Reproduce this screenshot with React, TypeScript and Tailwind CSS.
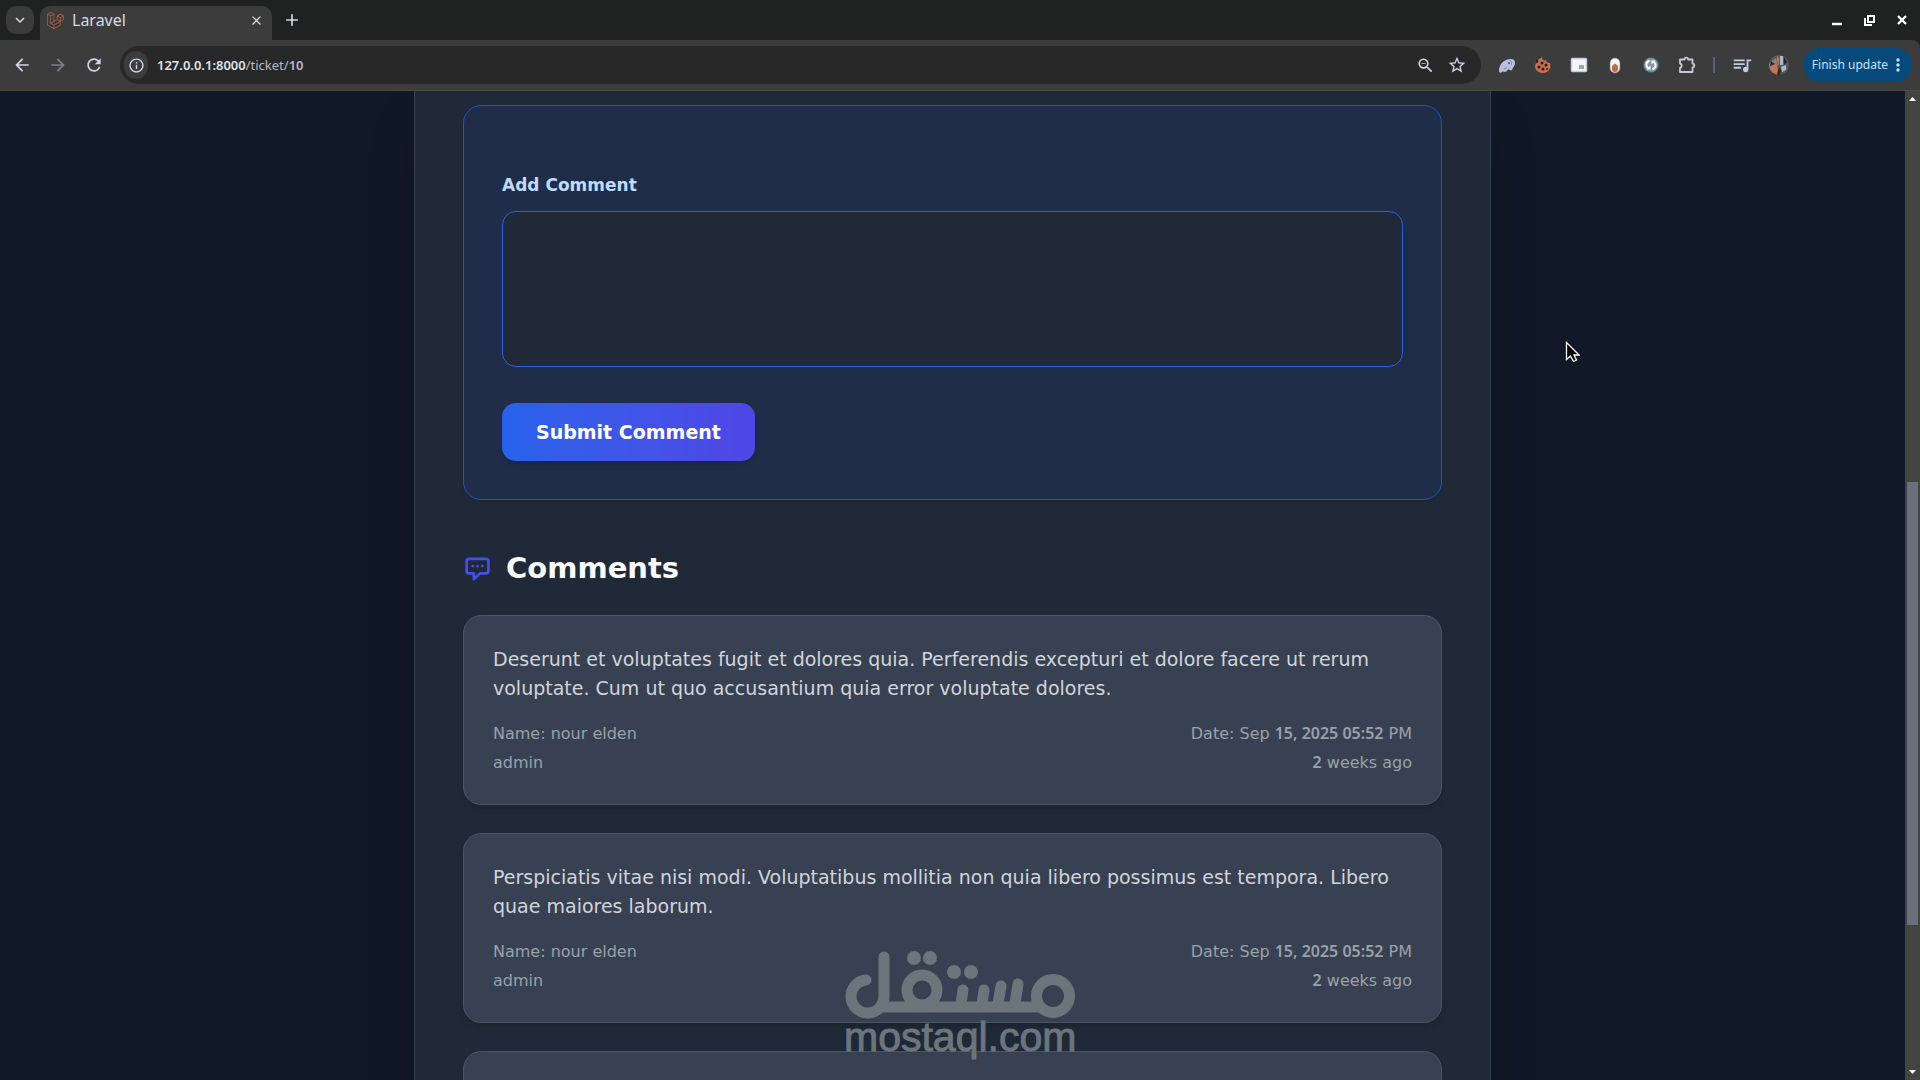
import React from "react";
import {
  MdArrowBack,
  MdArrowForward,
  MdRefresh,
  MdInfoOutline,
  MdOutlineZoomOut,
  MdStarBorder,
  MdQueueMusic,
  MdMoreVert,
  MdAdd,
  MdClose,
  MdKeyboardArrowDown,
} from "react-icons/md";
import { FaLaravel } from "react-icons/fa";

function TabStrip() {
  return (
    <div className="flex h-10 shrink-0 items-end bg-[#202221] text-[#d6dbe4]">
      <button aria-label="Search tabs" className="mb-[6px] ml-[6px] flex h-7 w-7 items-center justify-center rounded-[10px] bg-[#3b3b3b]">
        <MdKeyboardArrowDown size={18} />
      </button>
      <div className="ml-[6px] flex h-[34px] w-[232px] items-center rounded-t-[10px] bg-[#3c3c3c] pr-2 pb-[6px] pl-[7px]">
        <FaLaravel size={17} className="text-[#d4714a]" />
        <span className="ml-2 flex-1 font-['Noto_Sans'] text-[16px] leading-5">Laravel</span>
        <button aria-label="Close tab"><MdClose size={15} /></button>
      </div>
      <button aria-label="New tab" className="mb-[10px] ml-[10px]"><MdAdd size={20} /></button>
      <div className="mb-[10px] ml-auto flex items-center gap-[14px] pr-[9px] text-white">
        <button aria-label="Minimize" className="flex h-5 w-[18px] items-center justify-center">
          <svg width="18" height="20" viewBox="0 0 18 20"><path d="M3 14h10" stroke="currentColor" strokeWidth="2.4" /></svg>
        </button>
        <button aria-label="Restore" className="flex h-5 w-[18px] items-center justify-center">
          <svg width="18" height="20" viewBox="0 0 18 20" fill="none" stroke="currentColor" strokeWidth="2">
            <path d="M7 6h6v6H7zM4 8v7h7" />
          </svg>
        </button>
        <button aria-label="Close window" className="flex h-5 w-[18px] items-center justify-center">
          <svg width="18" height="20" viewBox="0 0 18 20"><path d="M5 6l8 8M13 6l-8 8" stroke="currentColor" strokeWidth="2.4" /></svg>
        </button>
      </div>
    </div>
  );
}

function Extensions() {
  return (
    <div className="flex items-center gap-4">
      <button aria-label="Elephant extension">
        <svg width="20" height="20" viewBox="0 0 20 20">
          <path d="M2 16c0-7 5-12 12-12 3 0 4 2 4 4 0 3-2 4-3 7-1 1-3 0-3-1-2 2-3 3-5 3-1-1-1-1-2 0s-3 1-3-1z" fill="#b6c2dd" />
          <path d="M13 5c2 1 2 4 1 5M7 14c1-1 2-1 3-1" fill="none" stroke="#7482a8" />
          <circle cx="12" cy="8" r="1" fill="#3340c0" />
        </svg>
      </button>
      <button aria-label="Cookie extension">
        <svg width="20" height="20" viewBox="0 0 20 20">
          <path d="M9 2c0 3 2 4 4 3 0 2 1 3 4 3 2 5-2 10-7 10S2 15 2 11l1-3c2 1 3-1 2-3z" fill="#c96f4c" />
          <g fill="#241f1d"><circle cx="9" cy="8" r="1.5" /><circle cx="6" cy="12" r="1.5" /><circle cx="10" cy="14" r="1.5" /><circle cx="13" cy="10" r="1.5" /><circle cx="14" cy="14" r="1" /><circle cx="4" cy="6" r="1" /></g>
        </svg>
      </button>
      <button aria-label="Picture in picture">
        <svg width="20" height="20" viewBox="0 0 20 20">
          <rect x="2.500" y="3.500" width="15" height="13" rx="1" fill="#f4f7fa" stroke="#c4ccd6" strokeWidth="1.500" />
          <rect x="10" y="10" width="5" height="4" fill="#9aa3b2" />
        </svg>
      </button>
      <button aria-label="Capsule extension">
        <svg width="20" height="20" viewBox="0 0 20 20">
          <rect x="5" y="3" width="10" height="15" rx="5" fill="#f4f5f5" stroke="#737b80" strokeWidth="0.600" />
          <path d="M10 8.500l3 2.500v3a3 3 0 0 1-6 0v-3z" fill="#c9693f" />
        </svg>
      </button>
      <button aria-label="Sync extension">
        <svg width="20" height="20" viewBox="0 0 20 20">
          <circle cx="10" cy="10" r="7.500" fill="#8397a6" stroke="#2a6288" />
          <path d="M8.500 5.500c-4 2-4 6-1 8M11.500 14.500c4-2 4-6 1-8" fill="none" stroke="#fff" strokeWidth="2" />
          <path d="M5.500 14.500h4v-4zM14.500 5.500h-4v4z" fill="#fff" />
        </svg>
      </button>
      <button aria-label="Extensions" className="text-[#c4cbd8]">
        <svg width="20" height="20" viewBox="0 0 20 20" fill="none" stroke="currentColor" strokeWidth="1.800" strokeLinejoin="round">
          <path d="M3 4.500h4.500a1.800 1.800 0 0 1 3.600 0H15.500v4.200a1.800 1.800 0 0 1 0 3.600V17H3v-4.200a2.200 2.200 0 0 0 0-4.300z" />
        </svg>
      </button>
    </div>
  );
}

function Avatar() {
  return (
    <button aria-label="Profile" className="ml-4">
      <svg width="20" height="20" viewBox="0 0 20 20" className="rounded-full">
        <rect width="20" height="20" fill="#55595c" />
        <path d="M0 8l7-5 2 7-5 10H0z" fill="#86827e" />
        <path d="M2 11l5-2 2 5-1 6-5-3zM8 0l2 4v7L8 6z" fill="#cf704a" />
        <path d="M11 1h3v9h-3zM12 12l5-2v5l-4 2z" fill="#aebac5" />
        <path d="M15 2l3 5-3 3zM10 12l2 3-1 5H8zM2 6l4 3-5 2z" fill="#25292d" />
      </svg>
    </button>
  );
}

function Toolbar() {
  return (
    <div className="flex h-[51px] shrink-0 items-center rounded-tr-lg border-b border-[#4a4a48] bg-[#3c3c3c] pr-[8px] pl-3 text-[#d0d7e2]">
      <div className="flex items-center gap-4">
        <button aria-label="Back"><MdArrowBack size={20} /></button>
        <button aria-label="Forward" className="text-[#7a808a]"><MdArrowForward size={20} /></button>
        <button aria-label="Reload"><MdRefresh size={20} /></button>
      </div>
      <div className="ml-4 flex h-[38px] min-w-0 flex-1 items-center rounded-full bg-[#282828] pr-[14px] pl-1">
        <button aria-label="Site information" className="flex h-7 w-6 items-center justify-center rounded-full bg-[#3c3c3c]">
          <MdInfoOutline size={17} />
        </button>
        <a href="#" className="ml-[9px] font-['Noto_Sans'] text-[13px] leading-5 text-[#b4bbc8]">
          <span className="font-semibold text-[#dde3ec]">127.0.0.1:8000</span>/ticket/<span className="font-semibold">10</span>
        </a>
        <button aria-label="Zoom" className="ml-auto"><MdOutlineZoomOut size={19} /></button>
        <button aria-label="Bookmark" className="ml-3"><MdStarBorder size={20} /></button>
      </div>
      <div className="ml-4"><Extensions /></div>
      <div className="ml-4 h-4 w-[2px] bg-[#566072]" />
      <button aria-label="Media" className="ml-4 text-[#c4cbd8]"><MdQueueMusic size={22} /></button>
      <Avatar />
      <button className="ml-[14px] flex h-[34px] items-center rounded-full bg-[#054a7b] pr-1 pl-[9px] font-['Noto_Sans'] text-[12px] leading-5 text-[#c6e2fb]">
        Finish update
        <MdMoreVert size={20} />
      </button>
    </div>
  );
}

const comments = [
  {
    text: "Deserunt et voluptates fugit et dolores quia. Perferendis excepturi et dolore facere ut rerum voluptate. Cum ut quo accusantium quia error voluptate dolores.",
  },
  {
    text: "Perspiciatis vitae nisi modi. Voluptatibus mollitia non quia libero possimus est tempora. Libero quae maiores laborum.",
  },
  { text: "" },
];

function Digits({ children }: { children: React.ReactNode }) {
  return <span className="font-['Noto_Sans'] leading-none font-semibold">{children}</span>;
}

function CommentCard({ text }: { text: string }) {
  return (
    <article className="min-h-[190px] rounded-[18px] border border-[#4b5563] bg-[#384151] px-[29px] pt-[29px] pb-[27px] shadow-md">
      {text && (
        <>
          <p className="text-[19px] leading-[29px] text-[#d1d5db]">{text}</p>
          <div className="mt-4 flex justify-between text-[16px] leading-[29px] text-[#99a1a9]">
            <div>
              <p>Name: nour elden</p>
              <p>admin</p>
            </div>
            <div className="text-right">
              <p>Date: Sep <Digits>15, 2025 05:52</Digits> PM</p>
              <p><Digits>2</Digits> weeks ago</p>
            </div>
          </div>
        </>
      )}
    </article>
  );
}

function Watermark() {
  return (
    <div className="pointer-events-none absolute bottom-[23px] left-[844px] text-[#6c757b]">
      <svg width="232" height="66" viewBox="0 0 232 66" fill="none" stroke="currentColor" className="block overflow-visible" role="img" aria-label="مستقل">
        <path d="M22 29A16.500 16.500 0 1 0 40 45V6" strokeWidth="11" strokeLinecap="round" />
        <path d="M37 56H198" strokeWidth="11" />
        <circle cx="78" cy="39" r="15" strokeWidth="11" />
        <circle cx="209" cy="45" r="16.500" strokeWidth="11" />
        <path d="M119 39l-2 14M140 39l-2 14M157 35l-3 18M174 33l-3 20" strokeWidth="11" strokeLinecap="round" />
        <g fill="currentColor" stroke="none">
          <circle cx="70" cy="7" r="7" /><circle cx="86" cy="7" r="7" />
          <circle cx="110" cy="21" r="7" /><circle cx="127" cy="21" r="7" />
        </g>
      </svg>
      <p className="font-['Liberation_Sans'] text-[41px] leading-[40px] [-webkit-text-stroke:1px_#6c757b]">mostaql.com</p>
    </div>
  );
}

function ScrollBar() {
  return (
    <div className="flex w-[15px] shrink-0 flex-col items-center bg-[#444442] py-1" aria-hidden="true">
      <svg width="9" height="5" viewBox="0 0 9 5" className="mt-[1px]"><path d="M1 5l3.500-4L8 5z" fill="#fff" /></svg>
      <div className="flex-[380]" />
      <div className="w-[11px] flex-[442] bg-[#69707b]" />
      <div className="flex-[145]" />
      <svg width="9" height="5" viewBox="0 0 9 5" className="mb-[1px]"><path d="M1 0l3.500 4L8 0z" fill="#fff" /></svg>
    </div>
  );
}

export default function App() {
  return (
    <div className="relative flex h-screen flex-col overflow-hidden bg-[#202221] font-['DejaVu_Sans',sans-serif]">
      <TabStrip />
      <Toolbar />
      <div className="flex min-h-0 flex-1">
        <main className="min-w-0 flex-1 overflow-hidden bg-[#111827]">
          <div className="mx-auto max-w-[1077px] border-x border-[#374151] bg-[#202937] px-12 pt-[14px] shadow-2xl">
            <form className="rounded-[18px] border border-[#1955d8] bg-[#202d49] px-[38px] pt-[65px] pb-[38px] shadow-sm" onSubmit={(e) => e.preventDefault()}>
              <label htmlFor="comment" className="block text-[17px] leading-[29px] font-bold text-[#bfdbfe]">Add Comment</label>
              <textarea id="comment" className="mt-[11px] block h-[156px] w-full resize-none rounded-[14px] border border-[#2563eb] bg-[#202937] p-4 text-white outline-none" />
              <button type="submit" className="mt-9 h-[58px] rounded-[14px] bg-linear-to-r from-[#2563eb] to-[#4f46e5] px-[34px] text-[19px] leading-[29px] font-bold text-white shadow-md">
                Submit Comment
              </button>
            </form>
            <h2 className="mt-[50px] flex items-center text-[29px] leading-9 font-bold text-[#f9fafb]">
              <svg width="29" height="29" viewBox="0 0 24 24" fill="none" stroke="#4350ee" strokeWidth="2.200" strokeLinecap="round" strokeLinejoin="round" className="mr-[14px]">
                <path d="M8 10h.01M12 10h.01M16 10h.01M9 16H5a2 2 0 0 1-2-2V6a2 2 0 0 1 2-2h14a2 2 0 0 1 2 2v8a2 2 0 0 1-2 2h-5l-5 5v-5z" />
              </svg>
              Comments
            </h2>
            <div className="mt-[29px] flex flex-col gap-7">
              {comments.map((c, i) => (
                <CommentCard key={i} text={c.text} />
              ))}
            </div>
          </div>
        </main>
        <ScrollBar />
      </div>
      <Watermark />
      <svg width="15" height="22" viewBox="0 0 15 22" className="pointer-events-none absolute top-[341px] left-[1565px]" aria-hidden="true">
        <path d="M1.500 1.500v17l4-3.500 3 5.500 3-1.500-2.500-5h5z" fill="#000" stroke="#fff" strokeWidth="1.300" />
      </svg>
    </div>
  );
}
